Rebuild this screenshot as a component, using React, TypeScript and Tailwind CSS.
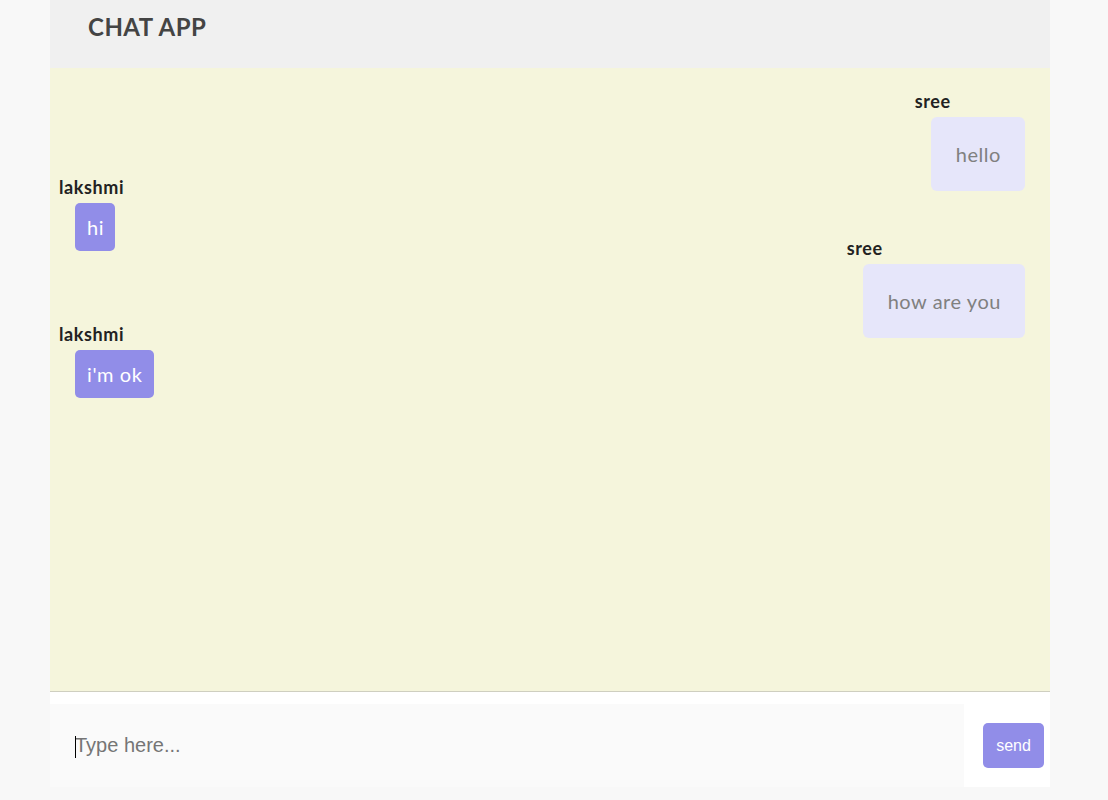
import React from "react";

type Msg = { user: string; text: string; mine: boolean };

const messages: Msg[] = [
  { user: "sree", text: "hello", mine: true },
  { user: "lakshmi", text: "hi", mine: false },
  { user: "sree", text: "how are you", mine: true },
  { user: "lakshmi", text: "i'm ok", mine: false },
];

const raleway = { fontFamily: "Lato, 'Open Sans', sans-serif" };
const arial = { fontFamily: "'Liberation Sans', Arial, sans-serif" };

export default function App() {
  return (
    <div className="min-h-screen bg-[#f8f8f8]" style={raleway}>
      <div className="ml-[50px] flex w-[1000px] flex-col">
        <header className="h-[68px] bg-[#f0f0f0] pl-[38px] pt-[12px]">
          <h1 className="text-[24px] font-bold leading-[30px] tracking-[0.5px] text-[#444444]">CHAT APP</h1>
        </header>
        <main className="flex h-[624px] flex-col border-b border-[#cfcfc0] bg-[#f5f5dc] pt-[23px]">
          {messages.map((m, i) => (
            <div
              key={i}
              className={
                (i > 0 ? (m.mine ? "-mt-[13px] " : "-mt-[14px] ") : "") +
                (m.mine
                  ? "mr-[25px] flex flex-col items-start self-end"
                  : "ml-[9px] flex flex-col items-start self-start")
              }
            >
              <div className="h-[20px] text-[18px] font-bold leading-[20px] tracking-[0.6px] text-[#222222]">
                {m.user}
              </div>
              {m.mine ? (
                <div className="ml-[16px] mt-[6px] rounded-[6px] bg-[#e6e6fa] py-[25px] pl-[25px] pr-[24px] text-[20px] font-normal leading-[24px] tracking-[0.55px] text-[#808080]">
                  {m.text}
                </div>
              ) : (
                <div className="ml-[16px] mt-[6px] rounded-[5px] bg-[#918de8] py-[12px] pl-[12px] pr-[11px] text-[20px] font-normal leading-[24px] tracking-[0.6px] text-white">
                  {m.text}
                </div>
              )}
            </div>
          ))}
        </main>
        <div className="bg-white pt-[12px]">
          <div className="flex items-center">
            <div className="relative">
              <input
                placeholder="Type here..."
                className="block h-[83px] w-[914px] bg-[#fafafa] pl-[25px] text-[20px] text-[#333] outline-none placeholder:text-[#757575]"
                style={arial}
              />
              <span className="pointer-events-none absolute left-[25px] top-[32px] h-[22px] w-px bg-black" />
            </div>
            <button
              className="ml-[19px] h-[45px] w-[61px] rounded-[5px] bg-[#918de8] text-[16px] text-white"
              style={arial}
            >
              send
            </button>
          </div>
        </div>
      </div>
    </div>
  );
}
